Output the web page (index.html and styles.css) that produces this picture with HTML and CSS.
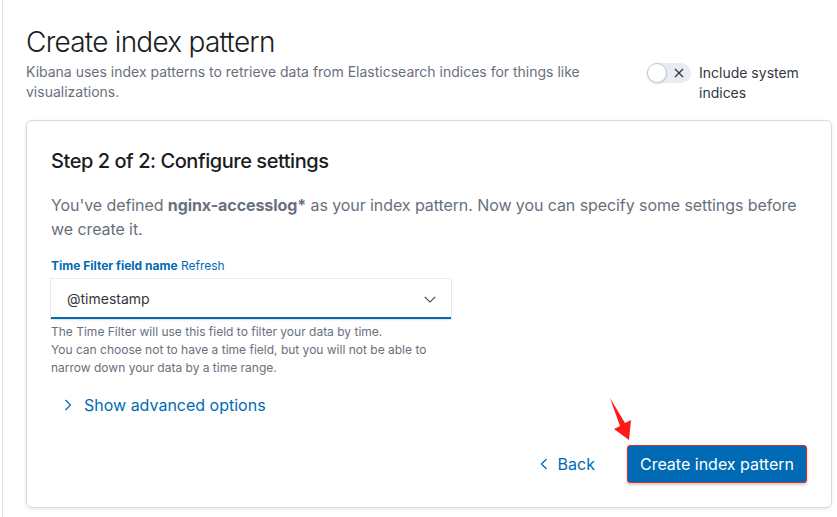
FILE: index.html
```html
<!DOCTYPE html>
<html lang="en">
<head>
<meta charset="utf-8">
<title>Create index pattern</title>
<link rel="stylesheet" href="styles.css">
</head>
<body>
<div class="page">
  <header class="header">
    <div class="header-text">
      <h1 class="title">Create index pattern</h1>
      <p class="subtitle">Kibana uses index patterns to retrieve data from Elasticsearch indices for things like visualizations.</p>
    </div>
    <div class="switch-group">
      <span class="switch">
        <span class="switch-knob"></span>
        <svg class="switch-x" width="10" height="10" viewBox="0 0 10 10"><path d="M1 1L9 9M9 1L1 9" stroke="#343741" stroke-width="1.3" fill="none"/></svg>
      </span>
      <span class="switch-label">Include system indices</span>
    </div>
  </header>

  <section class="card">
    <h2 class="step-title">Step 2 of 2: Configure settings</h2>
    <p class="intro">You've defined <strong>nginx-accesslog*</strong> as your index pattern. Now you can specify some settings before we create it.</p>

    <div class="form-row">
      <div class="label-row"><span class="label">Time Filter field name</span> <span class="refresh">Refresh</span></div>
      <div class="select">
        <span class="select-value">@timestamp</span>
        <svg class="select-arrow" width="14" height="14" viewBox="0 0 16 16"><path d="M2 5.5L8 11.5L14 5.5" stroke="#343741" stroke-width="1.2" fill="none"/></svg>
      </div>
      <div class="help">The Time Filter will use this field to filter your data by time.<br>You can choose not to have a time field, but you will not be able to narrow down your data by a time range.</div>
    </div>

    <div class="advanced">
      <svg width="16" height="16" viewBox="0 0 16 16"><path d="M5.5 3L10.5 8L5.5 13" stroke="#006BB4" stroke-width="1.3" fill="none"/></svg>
      <span>Show advanced options</span>
    </div>

    <div class="footer">
      <div class="back">
        <svg width="16" height="16" viewBox="0 0 16 16"><path d="M10.5 3L5.5 8L10.5 13" stroke="#006BB4" stroke-width="1.3" fill="none"/></svg>
        <span>Back</span>
      </div>
      <div class="create-btn">Create index pattern</div>
    </div>
  </section>
</div>
<svg class="annot-arrow" width="837" height="517" viewBox="0 0 837 517"><polygon points="610,398 625,423 631,420 629,440 614,429 620,426" fill="#ff1a1a"/></svg>
</body>
</html>
```

FILE: styles.css
```css
* { box-sizing: border-box; }
html, body { margin: 0; padding: 0; background: #fff; }
body {
  font-family: Inter, "Noto Sans", "Liberation Sans", sans-serif;
  color: #343741;
  width: 837px;
  height: 517px;
  overflow: hidden;
  position: relative;
}
.page {
  margin-left: 2px;
  border-left: 1px solid #dfe3ea;
  min-height: 517px;
  padding: 22px 5px 0 23px;
}
.header {
  display: flex;
  justify-content: space-between;
  align-items: flex-start;
}
.header-text { width: 580px; }
.title {
  margin: 0;
  font-size: 28px;
  line-height: 40px;
  font-weight: 300;
  color: #1a1c21;
  letter-spacing: -0.75px;
}
.subtitle {
  margin: 0;
  font-size: 14px;
  line-height: 20px;
  color: #69707d;
}
.switch-group {
  display: flex;
  align-items: flex-start;
  margin-top: 41px;
  width: 185px;
  gap: 8px;
}
.switch {
  position: relative;
  flex: none;
  width: 44px;
  height: 20px;
  border-radius: 10px;
  background: #e9ecf1;
  display: flex;
  align-items: center;
  justify-content: flex-end;
  padding-right: 7px;
}
.switch-knob {
  position: absolute;
  left: 0;
  top: 0;
  width: 20px;
  height: 20px;
  border-radius: 50%;
  background: #fff;
  border: 1px solid #c2c8d2;
  box-shadow: 0 1px 2px rgba(0,0,0,0.12);
}
.switch-label {
  font-size: 14px;
  line-height: 20px;
  color: #343741;
  width: 110px;
}
.card {
  margin-top: 17px;
  border: 1px solid #d3dae6;
  border-radius: 6px;
  padding: 24px;
  box-shadow: 0 1px 3px rgba(0,0,0,0.06), 0 2px 6px -1px rgba(0,0,0,0.06);
}
.step-title {
  margin: 0;
  font-size: 20px;
  line-height: 32px;
  font-weight: 500;
  color: #1a1c21;
  letter-spacing: -0.45px;
}
.intro {
  margin: 16px 0 0;
  font-size: 16px;
  line-height: 24px;
  color: #69707d;
  letter-spacing: -0.08px;
}
.intro strong { font-weight: 700; color: #69707d; }
.form-row { margin-top: 16px; width: 400px; }
.label-row {
  font-size: 12px;
  line-height: 18px;
  color: #006bb4;
  margin-bottom: 4px;
}
.label { font-weight: 700; }
.refresh { font-weight: 400; }
.select {
  height: 40px;
  background: #fff;
  display: flex;
  align-items: center;
  justify-content: space-between;
  padding: 0 14px 1px 16px;
  box-shadow: 0 0 0 1px rgba(32,38,47,0.08), 0 1px 2px rgba(0,0,0,0.08), inset 0 -2px 0 #006bb4;
}
.select-value { font-size: 14px; color: #343741; }
.select-arrow { display: block; }
.help {
  margin-top: 4px;
  font-size: 12px;
  line-height: 18px;
  color: #69707d;
}
.advanced {
  margin-top: 8px;
  height: 40px;
  display: flex;
  align-items: center;
  gap: 8px;
  padding-left: 9px;
  padding-bottom: 1px;
  color: #006bb4;
  font-size: 16px;
}
.advanced svg, .back svg { display: block; }
.footer {
  margin-top: 20px;
  display: flex;
  justify-content: flex-end;
  align-items: center;
  gap: 24px;
}
.back {
  display: flex;
  align-items: center;
  gap: 6px;
  color: #006bb4;
  font-size: 16px;
  height: 38px;
  padding: 0 8px 0 6px;
}
.create-btn {
  height: 38px;
  display: flex;
  align-items: center;
  padding: 0 12px;
  background: #006bb4;
  color: #fff;
  font-size: 16px;
  border: 1px solid #e0292b;
  border-radius: 3px;
  box-shadow: 0 2px 3px rgba(0,0,0,0.2);
}
.annot-arrow {
  position: absolute;
  left: 0;
  top: 0;
  pointer-events: none;
}
```
